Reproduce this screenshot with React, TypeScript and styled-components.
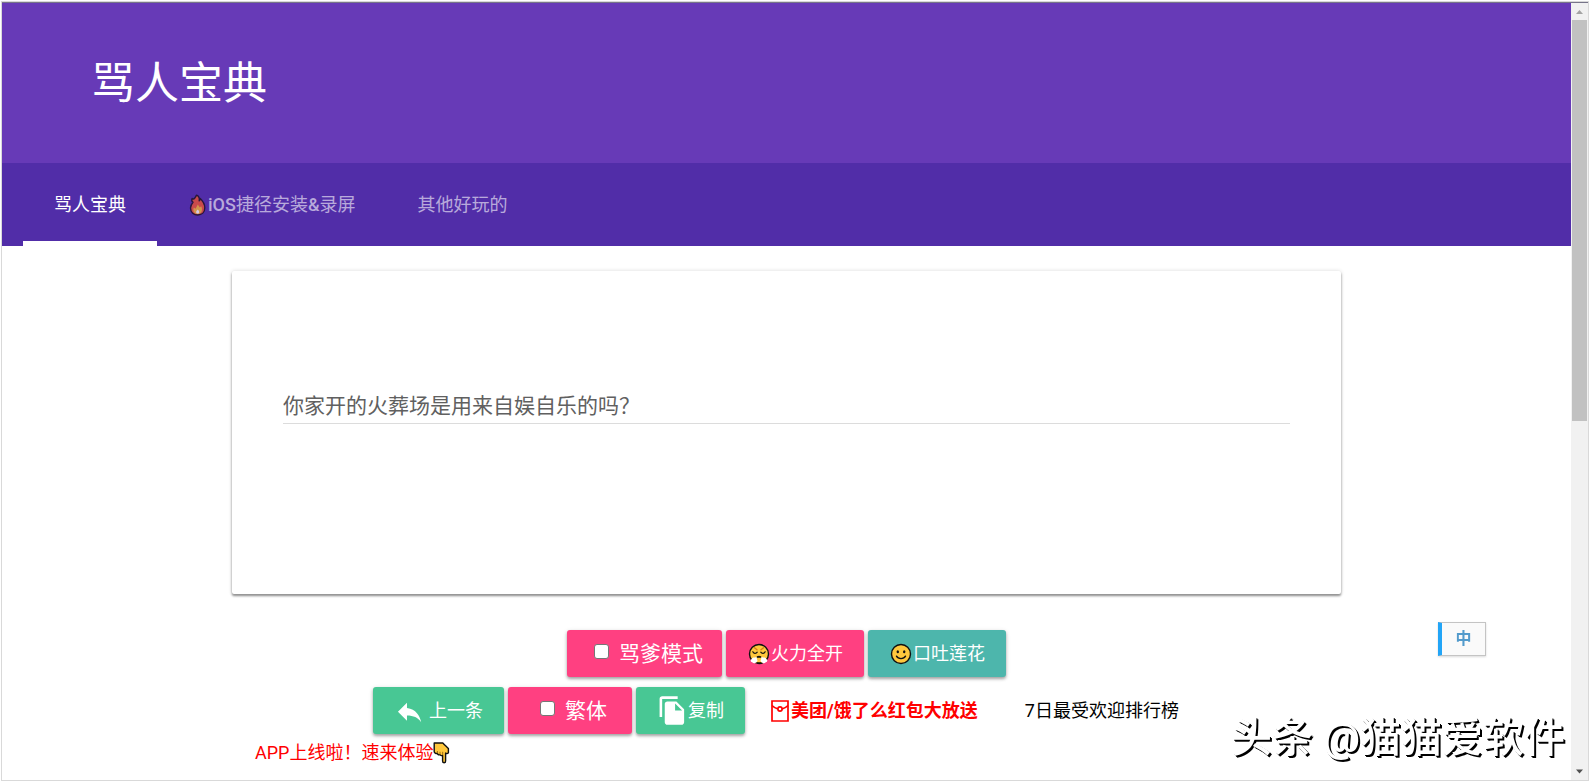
import React from 'react';
import styled, { createGlobalStyle } from 'styled-components';

const GlobalStyle = createGlobalStyle`
  *, *::before, *::after { box-sizing: border-box; }
  body {
    margin: 0;
    background: #fff;
    color: #000;
    font-family: Roboto, "Noto Sans CJK SC", sans-serif;
    font-size: 18px;
    line-height: 24px;
  }
`;

const Frame = styled.div`
  display: flex;
  min-height: calc(100vh - 2px);
  margin: 1px;
  border: 1px solid #d9d9d9;
`;

const Page = styled.div`
  flex: 1;
  min-width: 0;
  border-top: 1px solid #77758a;
`;

const Header = styled.header`
  display: flex;
  align-items: center;
  padding: 49px 89px 47px;
  background: #673ab7;
`;

const Title = styled.h1`
  margin: 0;
  color: #fff;
  font-size: 44px;
  font-weight: 400;
  line-height: 64px;
`;

const TabBar = styled.nav`
  display: flex;
  padding: 0 21px;
  background: #512da8;
`;

const Tab = styled.a<{ $active?: boolean }>`
  display: flex;
  align-items: center;
  height: 83px;
  padding: 5px 31px 0;
  border-bottom: 5px solid ${(p) => (p.$active ? '#fff' : 'transparent')};
  color: ${(p) => (p.$active ? '#fff' : 'rgba(255, 255, 255, 0.6)')};
  text-decoration: none;
  white-space: nowrap;

  svg { opacity: ${(p) => (p.$active ? 1 : 0.75)}; }
`;

const Latin = styled.span`
  font-weight: 500;
`;

const Main = styled.main`
  max-width: 1109px;
  margin: 25px auto 0;
`;

const Card = styled.section`
  padding: 117px 51px 170px;
  background: #fff;
  border-radius: 2px;
  box-shadow: 0 2px 2px rgba(0, 0, 0, 0.25), 0 2px 3px rgba(0, 0, 0, 0.2), 0 0 4px rgba(0, 0, 0, 0.14);
`;

const Sentence = styled.input`
  display: block;
  width: 100%;
  height: 36px;
  padding: 0 0 4px;
  border: 0;
  border-bottom: 1px solid #dcdcdc;
  outline: 0;
  background: none;
  color: #606060;
  font: inherit;
  font-size: 21px;
`;

const Actions = styled.div`
  display: flex;
  flex-direction: column;
  gap: 10px;
  margin-top: 36px;
`;

const ActionRow = styled.div`
  display: flex;
  flex-wrap: wrap;
  justify-content: center;
  gap: 4px;
`;

const tones = { pink: '#ff4081', teal: '#4db6ac', green: '#48c794' };

const Button = styled.button<{ $tone: keyof typeof tones }>`
  display: flex;
  align-items: center;
  height: 47px;
  padding: 0 21px;
  border: 0;
  border-radius: 3px;
  background: ${(p) => tones[p.$tone]};
  box-shadow: 0 2px 3px rgba(0, 0, 0, 0.3), 0 1px 5px rgba(0, 0, 0, 0.12);
  color: #fff;
  font: inherit;
  white-space: nowrap;
  cursor: pointer;
`;

const ToggleLabel = styled.label<{ $wide?: boolean }>`
  display: flex;
  align-items: center;
  gap: 10px;
  height: 47px;
  padding: ${(p) => (p.$wide ? '0 25px 0 32px' : '0 19px 0 27px')};
  border-radius: 3px;
  background: ${tones.pink};
  box-shadow: 0 2px 3px rgba(0, 0, 0, 0.3), 0 1px 5px rgba(0, 0, 0, 0.12);
  color: #fff;
  font-size: 21px;
  white-space: nowrap;
  cursor: pointer;
`;

const Checkbox = styled.input`
  appearance: none;
  width: 15px;
  height: 15px;
  margin: 0 0 4px;
  border: 1px solid #767676;
  border-radius: 3px;
  background: #fff;
`;

const TextLink = styled.a<{ $hot?: boolean }>`
  display: flex;
  align-items: center;
  gap: 2px;
  height: 47px;
  padding: 0 21px 0 22px;
  color: ${(p) => (p.$hot ? '#f00' : '#000')};
  font-weight: ${(p) => (p.$hot ? 700 : 400)};
  text-decoration: none;
  white-space: nowrap;
`;

const Promo = styled.a`
  display: inline-flex;
  align-items: center;
  margin: 7px 23px 0;
  color: #f00;
  text-decoration: none;
`;

const ScrollTrack = styled.div`
  display: flex;
  flex-direction: column;
  align-items: center;
  width: 17px;
  border-top: 1px solid #77758a;
  background: #f1f1f1;
`;

const ScrollArrow = styled.svg`
  flex: none;
  width: 17px;
  height: 17px;
`;

const ScrollLane = styled.div`
  flex: 1;
  width: 15px;
`;

const ScrollThumb = styled.div`
  height: 54%;
  background: #c1c1c1;
`;

const ImeBadge = styled.div`
  position: fixed;
  right: 104px;
  bottom: 126px;
  width: 48px;
  height: 34px;
  border: 1px solid #c4c4c4;
  border-left: 4px solid #22a5f7;
  background: #fafafa;
  box-shadow: 0 1px 2px rgba(0, 0, 0, 0.15);
  color: #539bcc;
  font-size: 16px;
  font-weight: 700;
  line-height: 31px;
  text-align: center;
`;

const Watermark = styled.div`
  position: fixed;
  right: 25px;
  bottom: 18px;
  color: #fff;
  font-size: 41px;
  font-weight: 500;
  line-height: 52px;
  text-shadow: 1px 1px 0 #000, 2px 2px 0 #000;
  white-space: nowrap;
`;

const FireIcon = () => (
  <svg width="20" height="22" viewBox="-1 0 20 22" aria-hidden="true">
    <path
      d="M7.6 1.2c3 1.400 3 3.800 2.600 5.600.8-.4 1-1.300 1-2.300 2.300 2.200 4.600 5.700 4.600 9.300 0 4.600-3 7.200-7 7.200s-7.300-2.600-7.300-6.900c0-2.700 1.300-4.500 2.500-5.900C2.900 7.600 2.500 6 3.100 4.400 4 5.400 4.900 5.200 5.600 4.300c.8-1 1.300-2.200 2-3.100z"
      fill="#f0542c" stroke="#1a1018" strokeWidth="1.400" strokeLinejoin="round"
    />
    <path d="M8.800 10.500l2 3.100 1.400-1.300c1.600 3 .9 7.600-3.400 7.600-4.200 0-5.200-3.600-3.900-6.400l1.700 1.300z" fill="#fcb92e" />
    <path d="M8.800 15.500c1.800 1.600 1.800 4-.1 4.100-2 0-2.100-2.500.1-4.100z" fill="#fff" />
  </svg>
);

const HuffIcon = () => (
  <svg width="24" height="22" viewBox="0 0 24 22" aria-hidden="true">
    <circle cx="12" cy="11" r="9.500" fill="#ffc83d" stroke="#111" strokeWidth="1.400" />
    <path d="M7.500 4.800l2.500 2M16.500 4.800l-2.500 2" stroke="#d67a1c" strokeWidth="1.300" strokeLinecap="round" />
    <path d="M5.800 8.700c.6 2 3.300 2.200 4.400.5M18.200 8.700c-.6 2-3.300 2.200-4.400.5" fill="none" stroke="#111" strokeWidth="1.200" strokeLinecap="round" />
    <path d="M9.700 14.200c.6-1.200 4-1.200 4.600 0z" fill="#111" stroke="#111" />
    <path d="M9.600 14c-.6 0-1.200.2-1.700.6-1.300-.5-2.700.1-3.200 1.300-1.600.7-1.200 3.100.5 3.300.9 1.300 2.900 1.400 3.700.2 1.500-.3 2-2 1.100-3zM14.400 14c.6 0 1.200.2 1.700.6 1.300-.5 2.700.1 3.200 1.300 1.600.7 1.200 3.100-.5 3.300-.9 1.300-2.900 1.400-3.700.2-1.500-.3-2-2-1.100-3z" fill="#fff" />
    <path d="M10 20h4" stroke="#111" strokeWidth="1.400" />
  </svg>
);

const SmileIcon = () => (
  <svg width="24" height="22" viewBox="0 0 24 22" aria-hidden="true">
    <circle cx="12" cy="11" r="9.500" fill="#ffc83d" stroke="#111" strokeWidth="1.400" />
    <ellipse cx="8.800" cy="8.800" rx="1.200" ry="1.500" fill="#111" />
    <ellipse cx="15.200" cy="8.800" rx="1.200" ry="1.500" fill="#111" />
    <path d="M7.500 13.200c1.800 3.200 7.200 3.200 9 0" fill="none" stroke="#111" strokeWidth="1.400" strokeLinecap="round" />
  </svg>
);

const ReplyIcon = () => (
  <svg width="35" height="31" viewBox="0 -1 27 24" aria-hidden="true">
    <path d="M10 9V5l-7 7 7 7v-4.100c5 0 8.500 1.600 11 5.100-1-5-4-10-11-11z" fill="#fff" />
  </svg>
);

const CopyIcon = () => (
  <svg width="31" height="31" viewBox="0 0 24 24" aria-hidden="true">
    <path d="M16 1H4c-1.100 0-2 .9-2 2v14h2V3h12V1zm-1 4l6 6v10c0 1.100-.9 2-2 2H7.990C6.890 23 6 22.100 6 21l.01-14c0-1.100.89-2 1.990-2h7zm-1 7h5.500L14 6.500V12z" fill="#fff" />
  </svg>
);

const EnvelopeIcon = () => (
  <svg width="18" height="22" viewBox="0 0 18 22" aria-hidden="true">
    <g fill="none" stroke="#f00" strokeWidth="1.700">
      <path d="M1 1h16v20H1z" />
      <path d="M1 5.500c2 2 4 3 5.800 3.300M17 5.500c-2 2-4 3-5.800 3.300" />
      <circle cx="9" cy="9" r="2.100" />
    </g>
  </svg>
);

const PointDownIcon = () => (
  <svg width="17" height="22" viewBox="0 0 17 22" aria-hidden="true">
    <path
      d="M1.200 1h8.600c1.600 1.800 3.600 3.600 5.600 5.600v4.200c-.8 1-2 .9-2.800.3v7.800c0 2.400-3 2.400-3 0v-5.500c-.8.5-2 .3-2.600-.7-1 .5-2.300 0-2.600-1.200-1.600.2-3.200-.6-3.200-2z"
      fill="#ffc83d" stroke="#111" strokeWidth="1.400" strokeLinejoin="round"
    />
    <path d="M4.400 11.200V9M7 12.400V9.800M9.700 13V9.800" fill="none" stroke="#9a6a10" strokeWidth="1" />
  </svg>
);

export default function App() {
  return (
    <>
      <GlobalStyle />
      <Frame>
        <Page>
          <Header>
            <Title>骂人宝典</Title>
          </Header>
          <TabBar>
            <Tab href="#home" $active>骂人宝典</Tab>
            <Tab href="#ios"><FireIcon /><Latin>iOS</Latin>捷径安装<Latin>&amp;</Latin>录屏</Tab>
            <Tab href="#more">其他好玩的</Tab>
          </TabBar>
          <Main>
            <Card>
              <Sentence aria-label="句子" defaultValue="你家开的火葬场是用来自娱自乐的吗？" />
            </Card>
            <Actions>
              <ActionRow>
                <ToggleLabel><Checkbox type="checkbox" />骂爹模式</ToggleLabel>
                <Button type="button" $tone="pink"><HuffIcon />火力全开</Button>
                <Button type="button" $tone="teal"><SmileIcon />口吐莲花</Button>
              </ActionRow>
              <ActionRow>
                <Button type="button" $tone="green"><ReplyIcon />上一条</Button>
                <ToggleLabel $wide><Checkbox type="checkbox" />繁体</ToggleLabel>
                <Button type="button" $tone="green"><CopyIcon />复制</Button>
                <TextLink href="#coupon" $hot><EnvelopeIcon />美团/饿了么红包大放送</TextLink>
                <TextLink href="#ranking">7日最受欢迎排行榜</TextLink>
              </ActionRow>
            </Actions>
            <Promo href="#app">APP上线啦！速来体验<PointDownIcon /></Promo>
          </Main>
        </Page>
        <ScrollTrack aria-hidden="true">
          <ScrollArrow viewBox="0 0 17 17"><path d="M5 11l3.500-4 3.500 4z" fill="#a3a3a3" /></ScrollArrow>
          <ScrollLane><ScrollThumb /></ScrollLane>
          <ScrollArrow viewBox="0 0 17 17"><path d="M5 6.500l3.500 4 3.500-4z" fill="#505050" /></ScrollArrow>
        </ScrollTrack>
      </Frame>
      <ImeBadge>中</ImeBadge>
      <Watermark>头条 @猫猫爱软件</Watermark>
    </>
  );
}
